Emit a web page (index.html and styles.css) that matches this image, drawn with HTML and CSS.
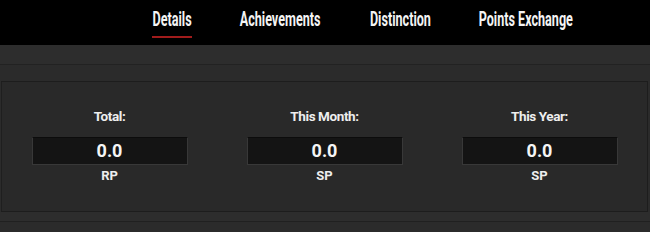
FILE: index.html
```html
<!DOCTYPE html>
<html lang="en">
<head>
<meta charset="utf-8">
<title>Points</title>
<link rel="stylesheet" href="styles.css">
</head>
<body>
  <nav class="tabs">
    <a class="tab tab-details active"><span class="tab-text">Details</span></a>
    <a class="tab tab-achievements"><span class="tab-text">Achievements</span></a>
    <a class="tab tab-distinction"><span class="tab-text">Distinction</span></a>
    <a class="tab tab-exchange"><span class="tab-text">Points Exchange</span></a>
  </nav>
  <div class="subbar"></div>
  <main class="content">
    <section class="panel">
      <div class="stat">
        <div class="stat-label">Total:</div>
        <div class="stat-box">0.0</div>
        <div class="stat-unit">RP</div>
      </div>
      <div class="stat">
        <div class="stat-label">This Month:</div>
        <div class="stat-box">0.0</div>
        <div class="stat-unit">SP</div>
      </div>
      <div class="stat">
        <div class="stat-label">This Year:</div>
        <div class="stat-box">0.0</div>
        <div class="stat-unit">SP</div>
      </div>
    </section>
    <div class="footer-band"></div>
  </main>
</body>
</html>
```
FILE: styles.css
```css
* { box-sizing: border-box; }
html, body { margin: 0; padding: 0; }
body {
  width: 650px;
  height: 232px;
  overflow: hidden;
  background: #2b2b2b;
  font-family: Roboto, "Liberation Sans", sans-serif;
  color: #f2f2f2;
}

.tabs {
  height: 45px;
  background: #000;
  display: flex;
  gap: 48px;
  padding-left: 152px;
  padding-top: 7px;
}
.tab {
  display: flex;
  flex-direction: column;
  align-items: center;
  color: #f4f4f4;
  cursor: pointer;
}
.tab-details { width: 40px; }
.tab-achievements { width: 81px; }
.tab-distinction { width: 62px; }
.tab-exchange { width: 94px; }
.tab-text {
  display: inline-block;
  white-space: nowrap;
  font-size: 20px;
  line-height: 24px;
  font-weight: 700;
  transform: scaleX(0.63);
  transform-origin: center;
}
.tab.active::after {
  content: "";
  display: block;
  width: 100%;
  height: 2px;
  margin-top: 5px;
  background: #a11c1c;
}

.subbar {
  height: 20px;
  background: #2d2d2d;
  border-bottom: 1px solid #222;
}

.content {
  padding: 16px 2px 0 1px;
}
.panel {
  display: grid;
  grid-template-columns: repeat(3, 1fr);
  background: #292929;
  border: 1px solid #1d1d1d;
  border-left-color: #1f1f1f;
  padding: 26px 0 27px;
}
.stat {
  display: flex;
  flex-direction: column;
  align-items: center;
}
.stat-label {
  font-size: 13.5px;
  line-height: 16px;
  font-weight: 700;
  letter-spacing: -0.4px;
  color: #eeeeee;
}
.stat-box {
  margin-top: 13px;
  width: 156px;
  height: 28px;
  background: #141414;
  border: 1px solid #383838;
  border-top-color: #0c0c0c;
  text-align: center;
  font-size: 18px;
  line-height: 26px;
  font-weight: 700;
  color: #f5f5f5;
}
.stat-unit {
  margin-top: 3px;
  font-size: 13px;
  line-height: 16px;
  font-weight: 700;
  color: #eeeeee;
}
.footer-band {
  height: 10px;
  background: #2d2d2d;
  border-bottom: 1px solid #202020;
  margin: 0 -2px 0 -1px;
}
```
